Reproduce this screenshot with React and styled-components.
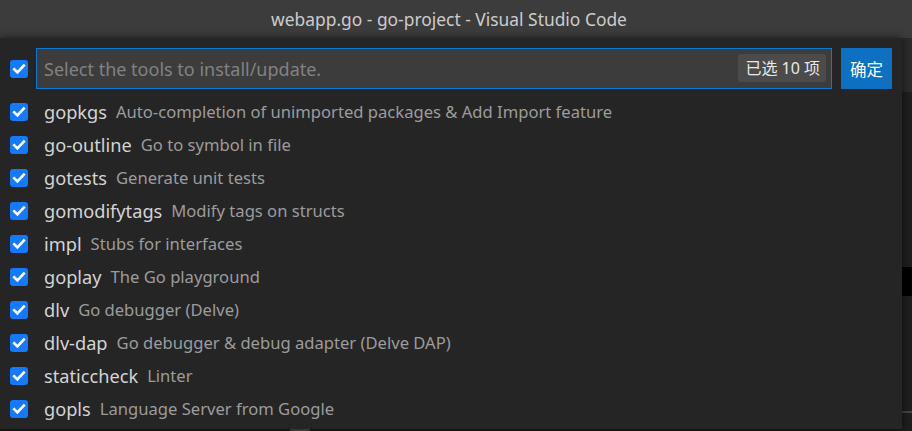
import React from "react";
import styled, { createGlobalStyle } from "styled-components";

const GlobalStyle = createGlobalStyle`
  html, body { margin: 0; padding: 0; background: #1e1e1e; }
  * { box-sizing: border-box; }
`;

const FONT = `"Noto Sans", "Open Sans", "Noto Sans CJK SC", sans-serif`;

const Window = styled.div`
  width: 912px;
  height: 431px;
  overflow: hidden;
  display: flex;
  flex-direction: column;
  font-family: ${FONT};
  background: #1e1e1e;
`;

const TitleBar = styled.div`
  height: 38px;
  flex: none;
  background: #3c3c3c;
  color: #cccccc;
  font-size: 17.4px;
  display: flex;
  align-items: center;
  justify-content: center;
  padding-right: 14px;
  padding-bottom: 1px;
`;

const Body = styled.div`
  flex: 1;
  display: flex;
  min-height: 0;
`;

const LeftColumn = styled.div`
  width: 902px;
  flex: none;
  display: flex;
  flex-direction: column;
`;

const QuickPick = styled.div`
  flex: 1;
  background: #252526;
  display: flex;
  flex-direction: column;
  padding-top: 10px;
  box-shadow: 0 0 8px rgba(0, 0, 0, 0.6);
  position: relative;
  z-index: 1;
`;

const Header = styled.div`
  display: flex;
  align-items: center;
  height: 41px;
  padding: 0 10px;
`;

const Box = styled.span`
  width: 18px;
  height: 18px;
  flex: none;
  border-radius: 3px;
  background: #1479fb;
  display: inline-flex;
  align-items: center;
  justify-content: center;
`;

const InputBox = styled.div`
  margin-left: 8px;
  width: 796px;
  height: 41px;
  background: #3c3c3c;
  border: 1px solid #0a7ad4;
  display: flex;
  align-items: center;
  padding: 0 5px 0 7px;
`;

const Placeholder = styled.span`
  flex: 1;
  color: #828282;
  font-size: 18px;
  line-height: 22px;
`;

const Badge = styled.span`
  background: #4b4b4b;
  color: #e8e8e8;
  font-size: 16px;
  height: 28px;
  line-height: 28px;
  padding: 0 6px 0 7px;
  border-radius: 3px;
  margin-bottom: 1px;
`;

const OkButton = styled.button`
  margin-left: 9px;
  width: 51px;
  height: 41px;
  border: none;
  background: #0e70c0;
  color: #ffffff;
  font-family: ${FONT};
  font-size: 16.5px;
  padding: 0;
  display: flex;
  align-items: center;
  justify-content: center;
`;

const List = styled.div`
  margin-top: 6px;
  display: flex;
  flex-direction: column;
`;

const Row = styled.div`
  height: 33px;
  display: flex;
  align-items: center;
  padding-left: 10px;
`;

const Label = styled.span`
  margin-left: 16px;
  color: #d4d4d4;
  font-size: 18.2px;
  line-height: 22px;
`;

const Description = styled.span`
  margin-left: 9px;
  color: #9c9c9c;
  font-size: 16.6px;
  line-height: 20px;
`;

const BottomEdge = styled.div`
  height: 2px;
  flex: none;
  background: #1c1c1c;
  display: flex;
`;

const Thumb = styled.span`
  margin-left: 290px;
  width: 20px;
  background: #4a4a4a;
`;

const SideStrip = styled.div`
  flex: 1;
  display: flex;
  flex-direction: column;
`;

const TabArea = styled.div`
  height: 54px;
  background: #2b2b2b;
`;

const EditorPart = styled.div`
  height: ${(p) => p.$h}px;
  background: ${(p) => p.$c};
  flex: ${(p) => (p.$fill ? 1 : "none")};
`;

const Check = () => (
  <svg width="14" height="14" viewBox="0 0 14 14" fill="none">
    <path
      d="M2.2 7.3 L5.4 10.4 L11.8 3.6"
      stroke="#ffffff"
      strokeWidth="2.6"
      strokeLinecap="square"
    />
  </svg>
);

const tools = [
  ["gopkgs", "Auto-completion of unimported packages & Add Import feature"],
  ["go-outline", "Go to symbol in file"],
  ["gotests", "Generate unit tests"],
  ["gomodifytags", "Modify tags on structs"],
  ["impl", "Stubs for interfaces"],
  ["goplay", "The Go playground"],
  ["dlv", "Go debugger (Delve)"],
  ["dlv-dap", "Go debugger & debug adapter (Delve DAP)"],
  ["staticcheck", "Linter"],
  ["gopls", "Language Server from Google"],
];

export default function App() {
  return (
    <>
      <GlobalStyle />
      <Window>
        <TitleBar>webapp.go - go-project - Visual Studio Code</TitleBar>
        <Body>
          <LeftColumn>
            <QuickPick>
              <Header>
                <Box>
                  <Check />
                </Box>
                <InputBox>
                  <Placeholder>Select the tools to install/update.</Placeholder>
                  <Badge>已选 10 项</Badge>
                </InputBox>
                <OkButton>确定</OkButton>
              </Header>
              <List>
                {tools.map(([name, desc]) => (
                  <Row key={name}>
                    <Box>
                      <Check />
                    </Box>
                    <Label>{name}</Label>
                    <Description>{desc}</Description>
                  </Row>
                ))}
              </List>
            </QuickPick>
            <BottomEdge>
              <Thumb />
            </BottomEdge>
          </LeftColumn>
          <SideStrip>
            <TabArea />
            <EditorPart $h={175} $c="#1e1e1e" />
            <EditorPart $h={29} $c="#000000" />
            <EditorPart $h={115} $c="#1e1e1e" />
            <EditorPart $h={2} $c="#444444" />
            <EditorPart $fill $c="#1e1e1e" />
          </SideStrip>
        </Body>
      </Window>
    </>
  );
}
